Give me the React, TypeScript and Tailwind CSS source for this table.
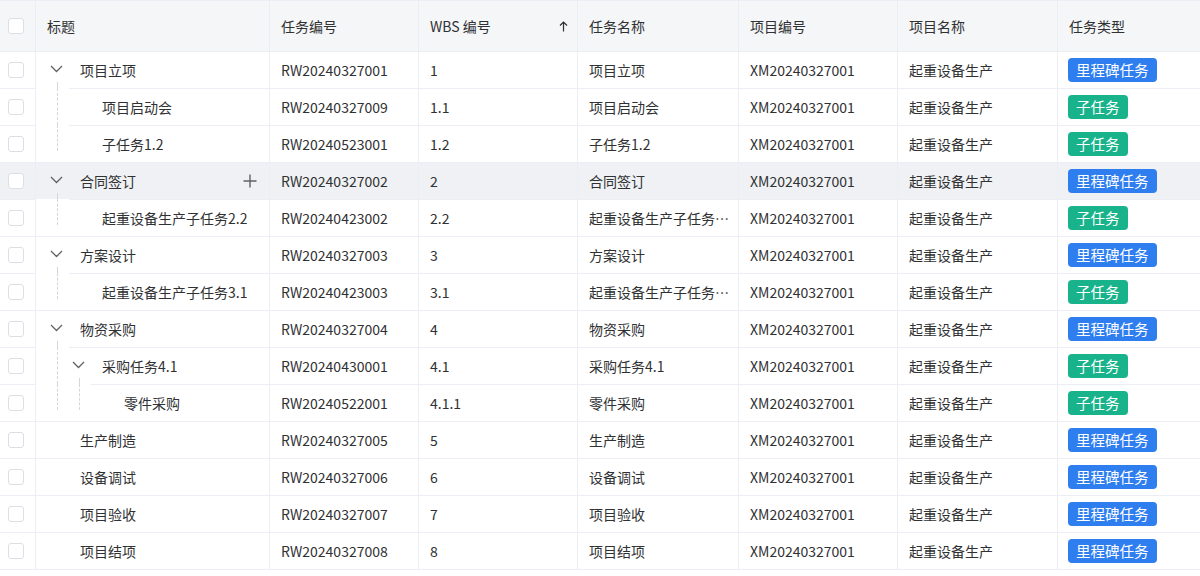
import React from "react"

type Row = {
  title: string
  code: string
  wbs: string
  level: number
  milestone: boolean
}

const rows: Row[] = [
  { title: "项目立项", code: "RW20240327001", wbs: "1", level: 0, milestone: true },
  { title: "项目启动会", code: "RW20240327009", wbs: "1.1", level: 1, milestone: false },
  { title: "子任务1.2", code: "RW20240523001", wbs: "1.2", level: 1, milestone: false },
  { title: "合同签订", code: "RW20240327002", wbs: "2", level: 0, milestone: true },
  { title: "起重设备生产子任务2.2", code: "RW20240423002", wbs: "2.2", level: 1, milestone: false },
  { title: "方案设计", code: "RW20240327003", wbs: "3", level: 0, milestone: true },
  { title: "起重设备生产子任务3.1", code: "RW20240423003", wbs: "3.1", level: 1, milestone: false },
  { title: "物资采购", code: "RW20240327004", wbs: "4", level: 0, milestone: true },
  { title: "采购任务4.1", code: "RW20240430001", wbs: "4.1", level: 1, milestone: false },
  { title: "零件采购", code: "RW20240522001", wbs: "4.1.1", level: 2, milestone: false },
  { title: "生产制造", code: "RW20240327005", wbs: "5", level: 0, milestone: true },
  { title: "设备调试", code: "RW20240327006", wbs: "6", level: 0, milestone: true },
  { title: "项目验收", code: "RW20240327007", wbs: "7", level: 0, milestone: true },
  { title: "项目结项", code: "RW20240327008", wbs: "8", level: 0, milestone: true },
]

const HOVER_ROW = 3

function Checkbox() {
  return <div className="h-4 w-4 rounded-[3px] border border-[#dcdfe6] bg-white" />
}

function Chevron() {
  return (
    <svg width="13" height="12" viewBox="0 0 13 12" fill="none" className="shrink-0">
      <polyline points="1,3 6.5,8.5 12,3" stroke="#606266" strokeWidth="1.3" />
    </svg>
  )
}

function Plus() {
  return (
    <svg width="14" height="14" viewBox="0 0 14 14" fill="none" className="ml-auto mr-[12px] shrink-0 self-center">
      <path d="M7 0.5v13M0.5 7h13" stroke="#5f6368" strokeWidth="1.4" />
    </svg>
  )
}

function ArrowUp() {
  return (
    <svg width="9" height="11" viewBox="0 0 9 11" fill="none" className="ml-auto mr-[9px]">
      <path d="M4.5 10.5V1M1 4.5L4.5 1 8 4.5" stroke="#303133" strokeWidth="1.2" />
    </svg>
  )
}

function TitleCell({ row, index, hover }: { row: Row; index: number; hover: boolean }) {
  const next = rows[index + 1]
  const hasKids = !!next && next.level > row.level
  // guide area ends where the row's top border begins
  const guide = row.level === 0 ? 0 : 12 + 22 * row.level - 1
  const lead = 50 + 22 * row.level - (36 + guide)

  return (
    <div className="flex w-[234px] shrink-0 border-r border-[#ebeef5]">
      {row.level > 0 && (
        <div className="flex shrink-0" style={{ width: guide }}>
          <div className="w-[21px] shrink-0" />
          {Array.from({ length: row.level }).map((_, a) => {
            const goesOn = !!next && next.level > a
            const w = a === row.level - 1 ? guide - 21 - 22 * a : 22
            return (
              <div key={a} className="flex shrink-0 flex-col" style={{ width: w }}>
                <div
                  className={
                    goesOn
                      ? "flex-1 border-l border-dashed border-[#d3d6dc]"
                      : "h-[26px] border-l border-dashed border-[#d3d6dc]"
                  }
                />
              </div>
            )
          })}
        </div>
      )}
      <div className="flex min-w-0 flex-1 border-t border-[#ebeef5]">
        <div className="shrink-0" style={{ width: lead }} />
        <div className="flex w-[30px] shrink-0 flex-col">
          {hasKids && (
            <>
              <div className="h-[11px] shrink-0" />
              <Chevron />
              <div className="flex-1" />
              <div className="ml-[7px] h-[6px] border-l border-dashed border-[#d3d6dc]" />
            </>
          )}
        </div>
        <div className="flex min-w-0 items-center">
          <span className="truncate">{row.title}</span>
        </div>
        {hover && <Plus />}
      </div>
    </div>
  )
}

function Cell({ w, children, className = "" }: { w: string; children?: React.ReactNode; className?: string }) {
  return (
    <div className={`flex shrink-0 items-center border-r border-t border-[#ebeef5] pl-[11px] ${w} ${className}`}>
      {children}
    </div>
  )
}

export default function App() {
  return (
    <div className="h-[576px] w-[1200px] overflow-hidden bg-white font-['Noto_Sans_CJK_SC','Noto_Sans',sans-serif] text-[14px] text-[#303133]">
      <div className="border-b border-[#ebeef5]">
        {/* header */}
        <div className="flex h-[51px] bg-[#f5f6f8]">
          <div className="flex w-[36px] shrink-0 items-center border-r border-t border-[#ebeef5] pl-2">
            <Checkbox />
          </div>
          <Cell w="w-[234px]" className="pl-[10px]">标题</Cell>
          <Cell w="w-[149px]">任务编号</Cell>
          <Cell w="w-[159px]">
            WBS 编号
            <ArrowUp />
          </Cell>
          <Cell w="w-[161px]">任务名称</Cell>
          <Cell w="w-[159px]">项目编号</Cell>
          <Cell w="w-[160px]">项目名称</Cell>
          <div className="flex flex-1 items-center border-t border-[#ebeef5] pl-[11px]">任务类型</div>
        </div>

        {rows.map((row, i) => {
          const hover = i === HOVER_ROW
          return (
            <div key={row.code} className={`flex h-[37px] ${hover ? "bg-[#eff1f4]" : "bg-white"}`}>
              <div className="flex w-[36px] shrink-0 items-center border-r border-t border-[#ebeef5] pl-2">
                <Checkbox />
              </div>
              <TitleCell row={row} index={i} hover={hover} />
              <Cell w="w-[149px]">{row.code}</Cell>
              <Cell w="w-[159px]">{row.wbs}</Cell>
              <Cell w="w-[161px]" className="pr-[3px]">
                <span className="max-w-[142px] truncate">{row.title}</span>
              </Cell>
              <Cell w="w-[159px]">XM20240327001</Cell>
              <Cell w="w-[160px]" className="pl-[10px]">起重设备生产</Cell>
              <div className="flex flex-1 items-center border-t border-[#ebeef5] pl-[10px]">
                {row.milestone ? (
                  <span className="flex h-6 items-center rounded-[4px] bg-[#2f7ef0] px-2 text-[14.5px] text-white">
                    里程碑任务
                  </span>
                ) : (
                  <span className="flex h-6 items-center rounded-[4px] bg-[#19b38b] px-2 text-[14.5px] text-white">
                    子任务
                  </span>
                )}
              </div>
            </div>
          )
        })}
      </div>
    </div>
  )
}
